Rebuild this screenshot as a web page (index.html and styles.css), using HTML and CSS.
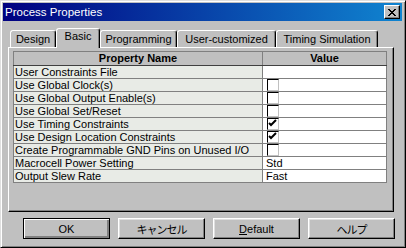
FILE: index.html
```html
<!DOCTYPE html>
<html lang="ja">

<head>
  <meta charset="UTF-8">
  <title>Process Properties</title>
  <link rel="stylesheet" href="styles.css">
</head>

<body>
  <div class="window">
    <div class="titlebar">
      <span class="title">Process Properties</span>
      <span class="closeBtn">
        <svg width="8" height="7" viewBox="0 0 8 7"><path d="M0 0h2v1h1v1h2V1h1V0h2v1H7v1H6v1H5v1h1v1h1v1h1v1H6V6H5V5H3v1H2v1H0V6h1V5h1V4h1V3H2V2H1V1H0z" fill="#000"/></svg>
      </span>
    </div>

    <div class="tabs">
      <div class="tab tabDesign">Design</div>
      <div class="tab tabBasic active">Basic</div>
      <div class="tab tabProg">Programming</div>
      <div class="tab tabUser">User-customized</div>
      <div class="tab tabTiming">Timing Simulation</div>
    </div>

    <div class="panel">
      <table class="props">
        <tr>
          <th class="nameCol">Property Name</th>
          <th class="valueCol">Value</th>
        </tr>
        <tr><td class="name">User Constraints File</td><td class="value"></td></tr>
        <tr><td class="name">Use Global Clock(s)</td><td class="value"><span class="check"></span></td></tr>
        <tr><td class="name">Use Global Output Enable(s)</td><td class="value"><span class="check"></span></td></tr>
        <tr><td class="name">Use Global Set/Reset</td><td class="value"><span class="check"></span></td></tr>
        <tr><td class="name">Use Timing Constraints</td><td class="value"><span class="check"><svg width="10" height="10" viewBox="0 0 10 10"><path d="M1 4l2 2l5-5" stroke="#000" stroke-width="2" fill="none"/></svg></span></td></tr>
        <tr><td class="name">Use Design Location Constraints</td><td class="value"><span class="check"><svg width="10" height="10" viewBox="0 0 10 10"><path d="M1 4l2 2l5-5" stroke="#000" stroke-width="2" fill="none"/></svg></span></td></tr>
        <tr><td class="name">Create Programmable GND Pins on Unused I/O</td><td class="value"><span class="check"></span></td></tr>
        <tr><td class="name">Macrocell Power Setting</td><td class="value text">Std</td></tr>
        <tr><td class="name">Output Slew Rate</td><td class="value text">Fast</td></tr>
      </table>
    </div>

    <div class="buttons">
      <div class="btn default">OK</div>
      <div class="btn jp">キャンセル</div>
      <div class="btn"><u>D</u>efault</div>
      <div class="btn jp">ヘルプ</div>
    </div>
  </div>
</body>

</html>
```

FILE: styles.css
```css
body {
  margin: 0;
  background-color: #c0c0c0;
  font-family: "Liberation Sans", "Noto Sans CJK JP", sans-serif;
  font-size: 11px;
  color: #000;
}

.window {
  width: 406px;
  height: 248px;
  box-sizing: border-box;
  padding: 1px;
  border: 1px solid;
  border-color: #dfdfdf #000 #000 #dfdfdf;
  box-shadow: inset 1px 1px #fff, inset -1px -1px #808080;
  background-color: #c0c0c0;
  overflow: hidden;
}

.titlebar {
  height: 18px;
  margin: 1px 0 0 1px;
  width: 399px;
  display: flex;
  align-items: center;
  justify-content: space-between;
  background: linear-gradient(to right, #000080, #1084d0);
  color: #fff;
}

.title {
  padding-left: 2px;
  font-size: 11.5px;
}

.closeBtn {
  width: 16px;
  height: 14px;
  box-sizing: border-box;
  margin-right: 2px;
  display: flex;
  align-items: center;
  justify-content: center;
  background-color: #c0c0c0;
  border: 1px solid;
  border-color: #fff #000 #000 #fff;
  box-shadow: inset -1px -1px #808080;
}

.tabs {
  display: flex;
  align-items: flex-end;
  height: 19px;
  margin-top: 7px;
  padding-left: 8px;
  position: relative;
  z-index: 2;
}

.tab {
  height: 17px;
  box-sizing: border-box;
  border: 1px solid;
  border-bottom: none;
  border-color: #fff #000 transparent #fff;
  border-radius: 3px 3px 0 0;
  box-shadow: inset -1px 0 #808080;
  background-color: #c0c0c0;
  text-align: center;
  line-height: 16px;
}

.tabDesign { width: 46px; }
.tabBasic { width: 44px; }
.tabProg { width: 77px; }
.tabUser { width: 99px; }
.tabTiming { width: 102px; }

.tab.active {
  height: 20px;
  margin-bottom: -1px;
  line-height: 14px;
}

.panel {
  margin-left: 6px;
  width: 386px;
  height: 165px;
  box-sizing: border-box;
  padding: 3px 0 0 4px;
  border: 1px solid;
  border-color: #fff #000 #000 #fff;
  box-shadow: inset -1px -1px #808080;
  position: relative;
  z-index: 1;
}

.props {
  border-collapse: collapse;
  width: 374px;
  table-layout: fixed;
  border-left: 1px solid #404040;
}

.props th,
.props td {
  height: 12px;
  padding: 0;
  border: 1px solid #808080;
  line-height: 12px;
  white-space: nowrap;
  overflow: hidden;
  vertical-align: top;
}

.props th {
  height: 13px;
  background-color: #c0c0c0;
  border-color: #808080;
  border-bottom-color: #404040;
  font-weight: bold;
  text-align: center;
  line-height: 13px;
}

.nameCol { width: 248px; }

.props td.name {
  padding-left: 1px;
  background: repeating-conic-gradient(#f6f6f4 0 25%, #d9dfd8 0 50%) 0 0 / 2px 2px;
}

.props td.value {
  background-color: #fff;
  padding-left: 3px;
}

.check {
  display: block;
  width: 12px;
  height: 12px;
  box-sizing: border-box;
  margin-left: 1px;
  border: 1px solid;
  border-color: #000 #c0c0c0 #c0c0c0 #000;
  background-color: #fff;
}

.check svg {
  display: block;
}

.buttons {
  display: flex;
  gap: 8px;
  margin-top: 6px;
  padding-left: 21px;
}

.btn {
  width: 87px;
  height: 21px;
  box-sizing: border-box;
  border: 1px solid;
  border-color: #fff #000 #000 #fff;
  box-shadow: inset -1px -1px #808080, inset 1px 1px #dfdfdf;
  display: flex;
  align-items: center;
  justify-content: center;
}

.btn.default {
  border-color: #000;
  box-shadow: inset 1px 1px #fff, inset -2px -2px #808080;
}

.btn.jp {
  letter-spacing: -1px;
}
```
